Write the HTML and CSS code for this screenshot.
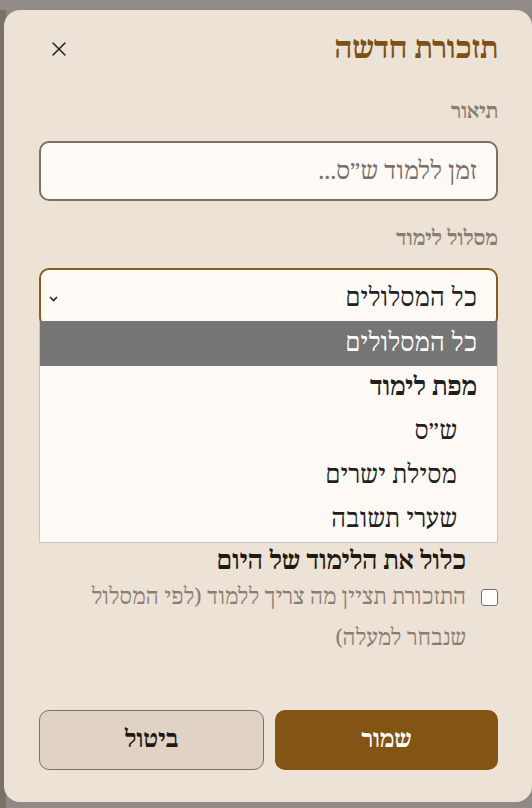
FILE: index.html
```html
<!DOCTYPE html>
<html lang="he" dir="rtl">
<head>
<meta charset="utf-8">
<title>תזכורת חדשה</title>
<link rel="stylesheet" href="styles.css">
</head>
<body>
<div class="modal">
  <div class="modal-header">
    <h2 class="modal-title">תזכורת חדשה</h2>
    <button class="close-btn" aria-label="סגור">
      <svg width="16" height="16" viewBox="0 0 16 16"><path d="M2 2 L14 14 M14 2 L2 14" stroke="#2b2622" stroke-width="1.6" fill="none" stroke-linecap="round"/></svg>
    </button>
  </div>

  <div class="field field-first">
    <label class="field-label">תיאור</label>
    <div class="input"><span class="placeholder">זמן ללמוד ש״ס...</span></div>
  </div>

  <div class="field">
    <label class="field-label">מסלול לימוד</label>
    <div class="select-wrap">
      <div class="select">
        <span class="select-value">כל המסלולים</span>
        <svg class="chev" width="9" height="6" viewBox="0 0 9 6"><path d="M1 1 L4.5 4.5 L8 1" stroke="#222" stroke-width="1.6" fill="none"/></svg>
      </div>
      <ul class="listbox">
        <li class="opt selected">כל המסלולים</li>
        <li class="opt group">מפת לימוד</li>
        <li class="opt sub">ש״ס</li>
        <li class="opt sub">מסילת ישרים</li>
        <li class="opt sub">שערי תשובה</li>
      </ul>
    </div>
  </div>

  <div class="include">
    <div class="include-title">כלול את הלימוד של היום</div>
    <span class="checkbox"></span>
    <div class="include-desc">התזכורת תציין מה צריך ללמוד (לפי המסלול שנבחר למעלה)</div>
  </div>

  <div class="actions">
    <button class="btn btn-primary">שמור</button>
    <button class="btn btn-secondary">ביטול</button>
  </div>
</div>
</body>
</html>
```
FILE: styles.css
```css
html {
  background:
    linear-gradient(#918c87 0 10px, transparent 10px),
    linear-gradient(to right, #7b7267 0 6px, #8f8a85 6px);
  height: 100%;
}
body {
  margin: 0;
  height: 808px;
  overflow: hidden;
  font-family: "Noto Serif Hebrew", "David CLM", "Frank Ruehl CLM", "FreeSerif", "Liberation Serif", "DejaVu Serif", serif;
  direction: rtl;
}
.modal {
  box-sizing: border-box;
  margin: 10px 0 0 5px;
  width: 528px;
  height: 792px;
  background: #ede2d6;
  border-radius: 16px;
  padding: 26px 34px 0 35px;
  display: flex;
  flex-direction: column;
}
.modal-header {
  display: flex;
  justify-content: space-between;
  align-items: center;
  height: 26px;
}
.modal-title {
  margin: 0;
  font-size: 29px;
  font-weight: bold;
  color: #7a5217;
}
.close-btn {
  border: 0;
  background: none;
  padding: 0;
  margin-left: 12px;
  width: 16px;
  height: 16px;
  display: flex;
}
.field {
  display: flex;
  flex-direction: column;
}
.field-label {
  margin-top: 28px;
  font-size: 20px;
  font-weight: bold;
  color: #8a7e73;
  line-height: 20px;
}
.field-first .field-label {
  margin-top: 40px;
}
.input {
  box-sizing: border-box;
  margin-top: 19px;
  height: 60px;
  border: 2px solid #7c7064;
  border-radius: 10px;
  background: #fffaf6;
  display: flex;
  align-items: center;
  padding: 0 19px;
}
.placeholder {
  font-size: 24px;
  color: #7b7068;
}
.select-wrap {
  position: relative;
  margin-top: 19px;
}
.select {
  box-sizing: border-box;
  height: 60px;
  border: 2px solid #8a5d1c;
  border-radius: 10px;
  background: #fffaf6;
  display: flex;
  align-items: center;
  justify-content: space-between;
  padding: 0 19px 0 8px;
}
.select-value {
  font-size: 24.5px;
  color: #222;
}
.chev {
  margin-top: 2px;
}
.listbox {
  position: absolute;
  top: 53px;
  left: 0;
  right: 0;
  margin: 0;
  padding: 0;
  list-style: none;
  background: #fffaf6;
  border: 1px solid #c9c4bf;
  border-top: 0;
  z-index: 2;
}
.opt {
  height: 44px;
  line-height: 44px;
  font-size: 24.5px;
  color: #1f1f1f;
  padding-right: 20px;
}
.opt.selected {
  background: #767676;
  color: #fff;
  height: 45px;
  line-height: 45px;
}
.opt.group {
  font-weight: bold;
}
.opt.sub {
  padding-right: 40px;
}
.include {
  margin-top: 219px;
  display: grid;
  grid-template-columns: 17px 1fr;
  column-gap: 15px;
  align-items: start;
}
.include-title {
  grid-column: 2;
  font-size: 24.5px;
  font-weight: bold;
  color: #22190f;
  line-height: 30px;
}
.checkbox {
  grid-column: 1;
  box-sizing: border-box;
  width: 17px;
  height: 17px;
  margin-top: 12px;
  border: 1px solid #77716b;
  border-radius: 3px;
  background: #fff;
}
.include-desc {
  grid-column: 2;
  font-size: 21.5px;
  line-height: 41px;
  color: #8a7e73;
}
.actions {
  margin-top: auto;
  margin-bottom: 32px;
  display: flex;
  gap: 11px;
}
.btn {
  flex: 1;
  height: 60px;
  border-radius: 10px;
  font-family: inherit;
  font-size: 23px;
  font-weight: bold;
}
.btn-primary {
  background: #835413;
  color: #fff;
  border: 0;
}
.btn-secondary {
  background: #e0d3c6;
  color: #1f1a15;
  border: 1px solid #7c7064;
}
```
